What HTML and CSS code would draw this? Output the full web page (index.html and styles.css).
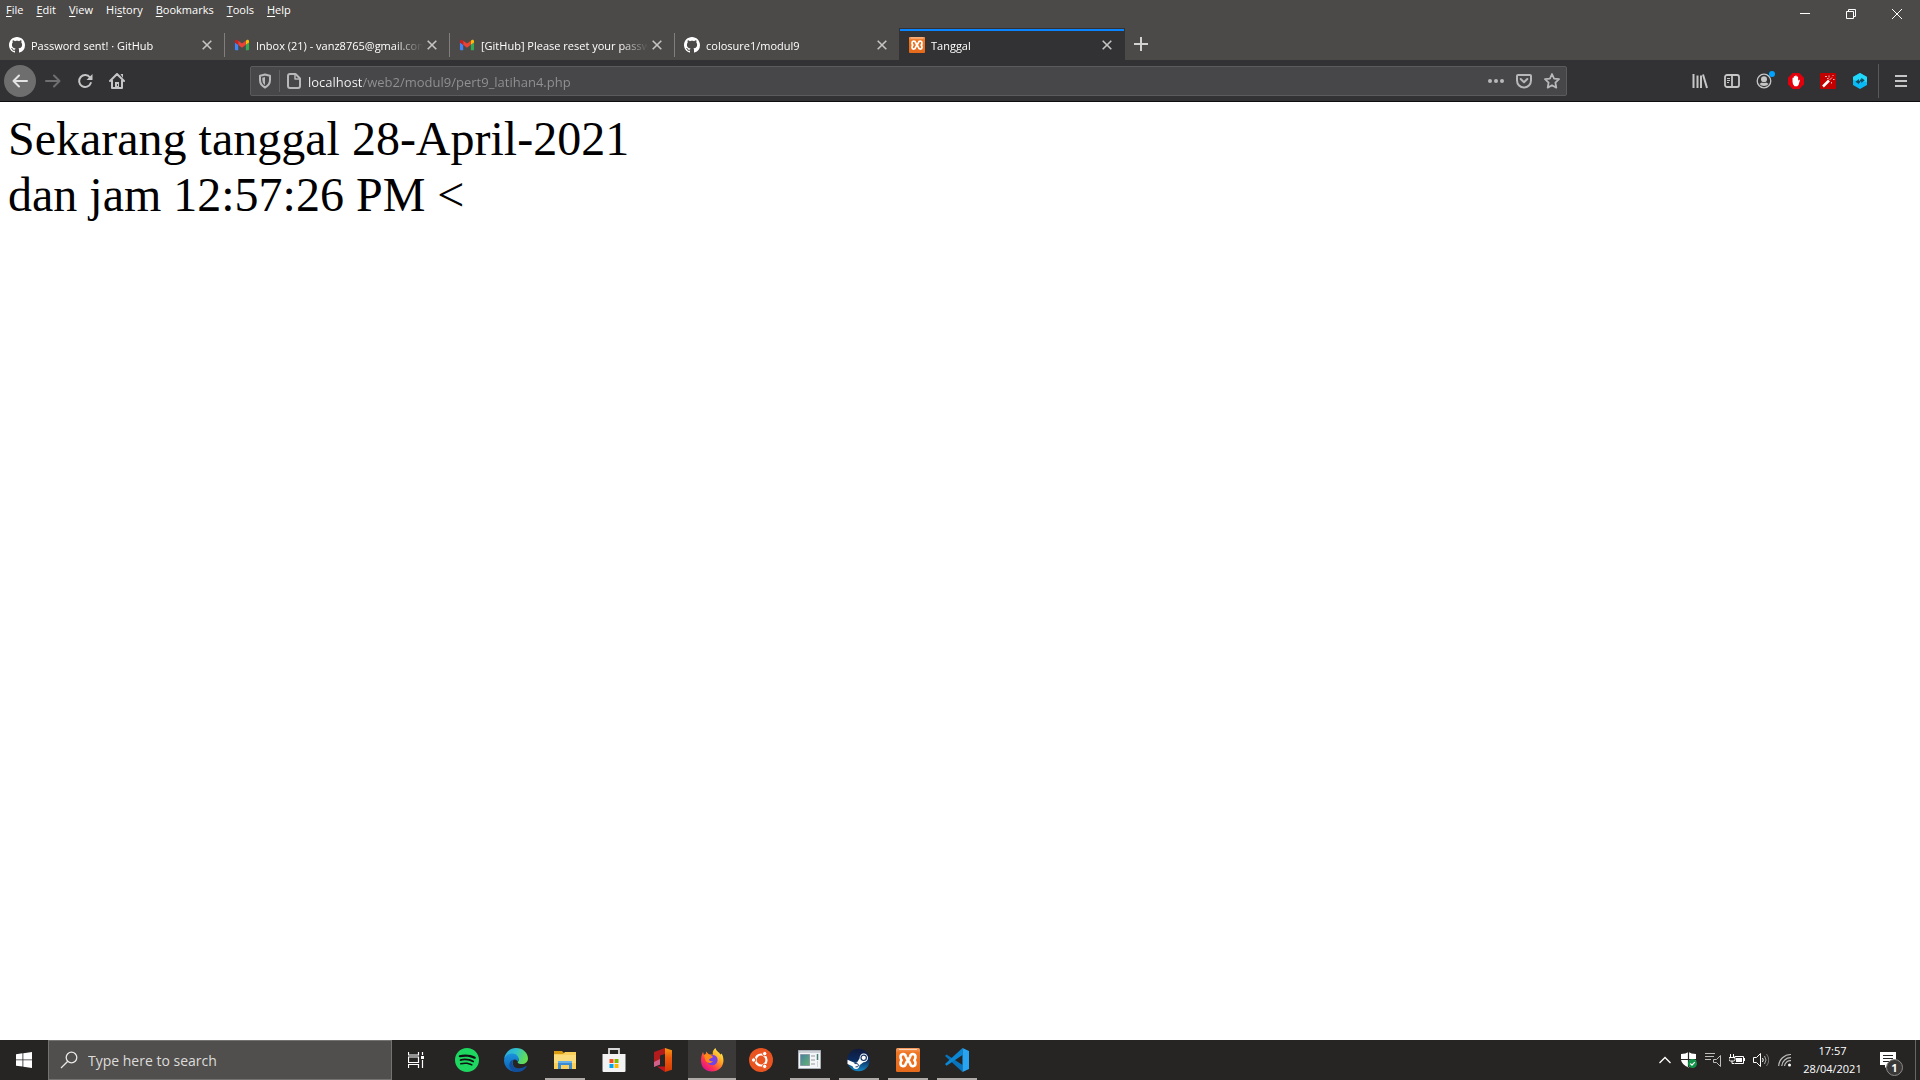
FILE: index.html
```html
<!DOCTYPE html>
<html lang="id">
<head>
<meta charset="utf-8">
<title>Tanggal</title>
<link rel="stylesheet" href="styles.css">
</head>
<body>
<svg class="defs" aria-hidden="true">
  <defs>
    <linearGradient id="xa" x1="0" y1="0" x2="0" y2="1"><stop offset="0" stop-color="#f7a064"/><stop offset=".2" stop-color="#ee7522"/><stop offset="1" stop-color="#e56a1b"/></linearGradient>
    <symbol id="github" viewBox="0 0 16 16"><path fill="#fff" d="M8 0C3.58 0 0 3.58 0 8c0 3.54 2.29 6.53 5.47 7.59.4.07.55-.17.55-.38 0-.19-.01-.82-.01-1.49-2.01.37-2.53-.49-2.69-.94-.09-.23-.48-.94-.82-1.13-.28-.15-.68-.52-.01-.53.63-.01 1.08.58 1.23.82.72 1.21 1.87.87 2.33.66.07-.52.28-.87.51-1.07-1.78-.2-3.64-.89-3.64-3.95 0-.87.31-1.59.82-2.15-.08-.2-.36-1.02.08-2.12 0 0 .67-.21 2.2.82.64-.18 1.32-.27 2-.27s1.36.09 2 .27c1.53-1.04 2.2-.82 2.2-.82.44 1.1.16 1.92.08 2.12.51.56.82 1.27.82 2.15 0 3.07-1.87 3.75-3.65 3.95.29.25.54.73.54 1.48 0 1.07-.01 1.93-.01 2.2 0 .21.15.46.55.38A8.01 8.01 0 0016 8c0-4.42-3.58-8-8-8z"/></symbol>
    <symbol id="gmail" viewBox="46 25 100 100"><path fill="#4285f4" d="M58 108h14V74L52 59v43c0 3.32 2.69 6 6 6"/><path fill="#34a853" d="M120 108h14c3.32 0 6-2.69 6-6V59l-20 15"/><path fill="#fbbc04" d="M120 48v26l20-15v-8c0-7.42-8.47-11.65-14.4-7.2"/><path fill="#ea4335" d="M72 74V48l24 18 24-18v26L96 92"/><path fill="#c5221f" d="M52 51v8l20 15V48l-5.6-4.2c-5.94-4.45-14.4-.22-14.4 7.2"/></symbol>
    <symbol id="xampp" viewBox="0 0 24 24"><rect width="24" height="24" rx="1.5" fill="url(#xa)"/><path d="M3 1.500h18" stroke="#fbd3b6"/><path fill="none" stroke="#fff" stroke-width="2.600" stroke-linejoin="round" d="M7 6Q9.500 6 9.800 8.500L11 10.800h2l1.200-2.300Q14.500 6 17 6q2.500.3 2.500 3 0 1.700-1.200 3.200 1.200 1.300 1.200 3 0 2.700-2.500 3-2.500 0-2.800-2.500L13 13.400h-2l-1.200 2.300Q9.500 18.200 7 18.200q-2.500-.3-2.500-3 0-1.700 1.200-3Q4.500 10.700 4.500 9 4.500 6.300 7 6z"/></symbol>
    <symbol id="cross" viewBox="0 0 10 10"><path d="M.7.700l8.600 8.600M9.300.700L.7 9.300" stroke="#c4c4c3" stroke-width="1.600"/></symbol>
  </defs>
</svg>

<header class="browser">
  <div class="menu-row">
    <nav class="menu">
      <button><u>F</u>ile</button><button><u>E</u>dit</button><button><u>V</u>iew</button><button>Hi<u>s</u>tory</button><button><u>B</u>ookmarks</button><button><u>T</u>ools</button><button><u>H</u>elp</button>
    </nav>
    <div class="window-controls">
      <button aria-label="Minimize"><svg width="10" height="10"><path d="M0 4.500h10" stroke="#fff"/></svg></button>
      <button aria-label="Restore"><svg width="10" height="10" fill="none" stroke="#fff"><path d="M.5 2.500h7v7h-7zM2.500 2.500v-2h7v7h-2"/></svg></button>
      <button aria-label="Close"><svg width="10" height="10"><path d="M0 0l10 10M10 0L0 10" stroke="#fff"/></svg></button>
    </div>
  </div>

  <div class="tabs">
    <div class="tab"><div class="tab-body"><svg class="fav"><use href="#github"/></svg><span class="tab-title">Password sent! · GitHub</span><button class="tab-close" aria-label="Close tab"><svg width="10" height="10"><use href="#cross"/></svg></button></div></div>
    <div class="tab"><div class="tab-body"><svg class="fav"><use href="#gmail"/></svg><span class="tab-title">Inbox (21) - vanz8765@gmail.com</span><button class="tab-close" aria-label="Close tab"><svg width="10" height="10"><use href="#cross"/></svg></button></div></div>
    <div class="tab"><div class="tab-body"><svg class="fav"><use href="#gmail"/></svg><span class="tab-title">[GitHub] Please reset your password</span><button class="tab-close" aria-label="Close tab"><svg width="10" height="10"><use href="#cross"/></svg></button></div></div>
    <div class="tab before-active"><div class="tab-body"><svg class="fav"><use href="#github"/></svg><span class="tab-title">colosure1/modul9</span><button class="tab-close" aria-label="Close tab"><svg width="10" height="10"><use href="#cross"/></svg></button></div></div>
    <div class="tab active"><div class="tab-body"><svg class="fav"><use href="#xampp"/></svg><span class="tab-title">Tanggal</span><button class="tab-close" aria-label="Close tab"><svg width="10" height="10"><use href="#cross"/></svg></button></div></div>
    <button class="new-tab" aria-label="New tab"><svg width="14" height="14"><path d="M7 0v14M0 7h14" stroke="#d2d2d1" stroke-width="2"/></svg></button>
  </div>

  <div class="toolbar">
    <div class="nav-buttons">
      <button class="back" aria-label="Back"><svg width="16" height="16" fill="none" stroke="#e4e4e4" stroke-width="2" stroke-linecap="round" stroke-linejoin="round"><path d="M15 8H1.500M7 2.500L1.500 8 7 13.500"/></svg></button>
      <button aria-label="Forward"><svg width="16" height="16" fill="none" stroke="#6f6f71" stroke-width="2" stroke-linecap="round" stroke-linejoin="round"><path d="M1 8h13.500M9 2.500L14.500 8 9 13.500"/></svg></button>
      <button aria-label="Reload"><svg width="16" height="16" fill="none" stroke="#c6c6c7" stroke-width="2" stroke-linecap="round"><path d="M13 4.500A6 6 0 1 0 13.800 10"/><path fill="#c6c6c7" stroke="none" d="M15.500 1v5.500q0 .5-.5.5H9.500z"/></svg></button>
      <button aria-label="Home"><svg width="16" height="16" fill="none" stroke="#c6c6c7" stroke-width="2" stroke-linecap="round" stroke-linejoin="round"><path d="M1 8l7-7 7 7M3 7.500V15h10V7.500"/><path stroke="none" fill="#c6c6c7" d="M6 9h4v6H6zM11.500 1H14v4z"/><path stroke="#323234" stroke-width="1" d="M8.500 11.500v1"/></svg></button>
    </div>
    <div class="address">
      <svg class="shield" width="16" height="16" fill="none" stroke="#b8b8ba" stroke-width="2" stroke-linejoin="round"><path d="M8 1.500Q5 2.500 3 2.700V7q0 5 5 7.500Q13 12 13 7V2.700Q11 2.500 8 1.500z"/><path fill="#b8b8ba" stroke="none" d="M8 4v8.300Q5.300 10.500 5.300 7V4.800z"/></svg>
      <span class="divider"></span>
      <svg class="doc" width="14" height="16" fill="none" stroke="#b8b8ba" stroke-width="2" stroke-linejoin="round"><path d="M3 1h5.500L13 5.500V13q0 2-2 2H3q-2 0-2-2V3q0-2 2-2z"/><path stroke-width="1.500" d="M8 1v5h5"/></svg>
      <input class="url" type="text" aria-label="Address" value="localhost/web2/modul9/pert9_latihan4.php">
      <button aria-label="Page actions"><svg width="16" height="16" fill="#b8b8ba"><circle cx="2" cy="8" r="2"/><circle cx="8" cy="8" r="2"/><circle cx="14" cy="8" r="2"/></svg></button>
      <button aria-label="Save to Pocket"><svg width="16" height="16" fill="none" stroke="#b8b8ba" stroke-width="2" stroke-linecap="round" stroke-linejoin="round"><path d="M2 2h12q1 0 1 1v4.500a7 7 0 0 1-14 0V3q0-1 1-1zM4.700 6L8 9.200 11.300 6"/></svg></button>
      <button aria-label="Bookmark"><svg width="16" height="16" fill="none" stroke="#b8b8ba" stroke-width="1.800" stroke-linejoin="round"><path d="M8 1l2.100 4.600 4.900.6-3.600 3.400.9 5L8 12.200l-4.300 2.400.9-5L1 6.200l4.900-.6z"/></svg></button>
    </div>
    <div class="extensions">
      <button aria-label="Library"><svg width="16" height="16" fill="none" stroke="#c6c6c7" stroke-width="2"><path d="M1.500 1v14M5.500 2.500V15M9 2.500V15M11 1.500L15 15"/></svg></button>
      <button aria-label="Sidebars"><svg width="16" height="16" fill="none" stroke="#c6c6c7" stroke-width="1.800"><rect x="1" y="2" width="14" height="12" rx="2"/><path d="M8 2v12"/><path stroke-width="1" d="M3 5.500h3M3 7.500h3M3 9.500h2"/></svg></button>
      <button class="account" aria-label="Account"><svg width="16" height="16" fill="#c6c6c7"><circle cx="8" cy="8" r="6.800" fill="none" stroke="#c6c6c7" stroke-width="1.300"/><circle cx="8" cy="6.300" r="3"/><path d="M3.500 11Q5 9.500 6 9.500q2 1 4 0 1 0 2.500 1.500Q11 13 8 13t-4.500-2z"/></svg><i class="dot"></i></button>
      <button aria-label="Ad blocker"><svg width="16" height="16"><path fill="#e2000d" d="M4.700 0h6.600L16 4.700v6.600L11.300 16H4.700L0 11.300V4.700z"/><path fill="#fff" d="M4.500 8.500V5q.7-.8 1.300 0V3.500q.7-.8 1.400 0v-.7q.8-.8 1.500 0v1q.8-.8 1.400 0V8l.8-1.200q.9-.3 1 .4L10.500 12l-1.300 1.200H6.500Q4.500 12 4.500 8.500z"/></svg></button>
      <button aria-label="Magic actions"><svg width="16" height="16"><rect width="16" height="16" rx="1" fill="#c20000"/><path stroke="#fff" stroke-width="2.500" d="M3 13.500l6-6"/><path stroke="#f4b5b5" d="M9.500 7L12 4.500M5 3.500h2M9 2.500v2M12.500 2.500h1M13 6.500h1.500M11.500 9v1.500M7 5.500h1.500"/></svg></button>
      <button aria-label="Sync extension"><svg width="16" height="16"><path fill="#08b9f5" d="M8 0l7 4v8l-7 4-7-4V4z"/><path fill="#20d9fa" d="M8 0l7 4v5L1 7V4z"/><path fill="#124a60" d="M3.500 8.700L7 6v1.700h1v2H7v1.500zM12.700 7.300L9.300 4.800v1.700H8v2h1.300v1.500z"/></svg></button>
      <button class="app-menu" aria-label="Menu"><svg width="12" height="12"><path d="M0 1h12M0 6h12M0 11h12" stroke="#c6c6c7" stroke-width="2"/></svg></button>
    </div>
  </div>
</header>

<main class="page">Sekarang tanggal 28-April-2021<br>dan jam 12:57:26 PM &lt;</main>

<footer class="taskbar">
  <button class="start" aria-label="Start"><svg width="16" height="16" fill="#fff"><path d="M0 2.200L6.500 1.300v6.200H0zM7.300 1.200L16 0v7.500H7.300zM0 8.300h6.500v6.300L0 13.700zM7.300 8.300H16V16l-8.700-1.200z"/></svg></button>
  <label class="search"><svg width="18" height="18" fill="none" stroke="#e8e8e8" stroke-width="1.300"><circle cx="11.500" cy="6.500" r="5.300"/><path d="M7.800 10.300L1 17"/></svg><input type="text" placeholder="Type here to search" aria-label="Search"></label>
  <button class="task-view" aria-label="Task View"><svg width="16" height="16" fill="none" stroke="#fff"><path stroke-width="1.200" d="M.5 0v3h10V0M.5 16v-3.500h10V16M.5 5h10v5.500H.5zM14.500 0v3M14.500 8v8"/><path fill="#fff" stroke="none" d="M13 4h3v3h-3z"/></svg></button>
  <div class="apps">
    <button aria-label="Spotify"><svg viewBox="0 0 24 24"><circle cx="12" cy="12" r="11" fill="#111"/><path fill="#1ed760" d="M12 0C5.400 0 0 5.400 0 12s5.400 12 12 12 12-5.400 12-12S18.660 0 12 0zm5.521 17.340c-.24.359-.66.480-1.021.24-2.820-1.740-6.360-2.101-10.561-1.141-.418.122-.779-.179-.899-.539-.12-.421.180-.780.540-.9 4.560-1.021 8.520-.6 11.640 1.320.420.180.479.659.301 1.020zm1.440-3.300c-.301.420-.841.600-1.262.300-3.239-1.980-8.159-2.580-11.939-1.380-.479.120-1.020-.120-1.140-.600-.120-.480.120-1.021.600-1.141C9.600 9.900 15 10.561 18.720 12.840c.361.181.540.780.241 1.200zm.120-3.360C15.240 8.400 8.820 8.160 5.160 9.301c-.600.179-1.200-.181-1.380-.721-.180-.601.180-1.200.720-1.381 4.260-1.260 11.280-1.020 15.721 1.621.539.300.719 1.020.419 1.560-.299.421-1.020.599-1.559.300z"/></svg></button>
    <button aria-label="Edge"><svg viewBox="0 0 24 24"><defs><linearGradient id="e1" x1="0" y1="0" x2="1" y2=".3"><stop offset="0" stop-color="#2aa5dc"/><stop offset=".5" stop-color="#2fc1cf"/><stop offset="1" stop-color="#62dd54"/></linearGradient><linearGradient id="e2" x1="0" y1="0" x2="0" y2="1"><stop offset="0" stop-color="#1a93dd"/><stop offset="1" stop-color="#0c5cb4"/></linearGradient></defs><path fill="url(#e1)" d="M.2 10.500C1 4.500 6 0 12 0c7 0 12 5 12 10.500 0 3.500-2.800 5.500-6 5.500-3 0-4.500-1-4.300-1.700.3-.7 1-1.300 1-2.500 0-2-2.200-4-5.200-4-5 0-8.300 2.200-9.300 2.700z"/><path fill="url(#e2)" d="M0 12C.5 8 4.500 5.500 8.500 5.500c4 0 6.200 3 6.200 6 0 1.300-1 2.300-1 2.300S12 10.500 9.500 12c-2 2-.5 8.500 5 11.500C6 25.500 0 19 0 12z"/><path fill="#114f9d" d="M9.300 11.500C7 15 9 19 12.500 20c4 1 7.500-.5 9.500-2 .5-.2.900.2.600.700C20.500 22 17 24 13 24c-6 0-8.500-5-7.500-8.500.5-2 2-3.500 3.800-4z"/></svg></button>
    <button class="open" aria-label="File Explorer"><svg viewBox="0 0 24 24"><path fill="#d99b12" d="M1 3h8l2 2v3H1z"/><path fill="#f9cf5b" d="M1 6h9l2-2h11v17H1z"/><path fill="#fbdc7d" d="M1 7h22v8H1z"/><path fill="#3c8bd0" d="M5 13h14v8h-3v-4H8v4H5z"/><path fill="#65b1e8" d="M5 13h14v2H5z"/></svg></button>
    <button aria-label="Microsoft Store"><svg viewBox="0 0 24 24"><path fill="none" stroke="#d9d9d9" stroke-width="1.800" d="M7 7V1h10v6"/><path fill="#f3f3f3" d="M.5 6h23v17q0 1-1 1h-21q-1 0-1-1z"/><path fill="#f25022" d="M7.500 11h4v4h-4z"/><path fill="#7fba00" d="M12.500 11h4v4h-4z"/><path fill="#00a4ef" d="M7.500 16h4v4h-4z"/><path fill="#ffb900" d="M12.500 16h4v4h-4z"/></svg></button>
    <button aria-label="Office"><svg viewBox="0 0 24 24"><defs><linearGradient id="of" x1="0" y1="0" x2="0" y2="1"><stop offset="0" stop-color="#f39a12"/><stop offset=".4" stop-color="#ef5a0c"/><stop offset="1" stop-color="#d13a04"/></linearGradient></defs><path fill="#b21c1c" d="M3 4l11-4v6L9 7.500v9L3 18z"/><path fill="#d0618a" d="M3 14l6-3v5.500L3 19z"/><path fill="#c41320" d="M6 18.500h8V24z"/><path fill="url(#of)" d="M14 0l7 2.200v19.600L14 24z"/></svg></button>
    <button class="current" aria-label="Firefox"><svg viewBox="0 0 24 24"><defs><linearGradient id="ff" x1=".9" y1=".1" x2=".2" y2=".9"><stop offset="0" stop-color="#fff44f"/><stop offset=".4" stop-color="#ff9a1f"/><stop offset=".75" stop-color="#ff3750"/><stop offset="1" stop-color="#e31587"/></linearGradient></defs><path fill="url(#ff)" d="M3 4l1 3 2-1.500V3.500l3 3h4C12 4 13.500 1.500 15.500 0c.5 3 3.500 4 5 6.500C22 6 21.500 5 21.500 5 24.500 11 24 16 20.500 20c-5 5-13 4.500-17 0C-.5 15 1 8 3 4z"/><circle cx="12.300" cy="12" r="5.300" fill="#7542e5"/><path fill="#ff8b16" d="M4 7c4-2 8 0 9 2-1 1.500-3 1-4 2.500 0 1.500 2 2 4 1.500-2 3-6 2.500-7.500-.5z"/><path fill="#ffc02c" d="M14 2c4 3 7 7 4 13 3-8-4-8-4-13z"/></svg></button>
    <button aria-label="Ubuntu"><svg viewBox="0 0 24 24"><circle cx="12" cy="12" r="12" fill="#e95420"/><circle cx="12" cy="12" r="5.500" fill="none" stroke="#fff" stroke-width="2.200"/><g fill="#fff" stroke="#e95420"><circle cx="4.600" cy="12" r="2.200"/><circle cx="15.700" cy="5.600" r="2.200"/><circle cx="15.700" cy="18.400" r="2.200"/></g></svg></button>
    <button class="open" aria-label="Application"><svg viewBox="0 0 24 24"><defs><linearGradient id="ap" x1="0" y1="0" x2="1" y2="1"><stop offset="0" stop-color="#477fa5"/><stop offset="1" stop-color="#62b46b"/></linearGradient></defs><path fill="#f4f5f6" stroke="#a9b0b7" d="M.5 2.500h22v18H.5z"/><path fill="#cbd1d6" d="M1 3h21v2H1z"/><path fill="url(#ap)" stroke="#8999a5" d="M2.500 6.500h9v11h-9z"/><path stroke="#c4c8cb" stroke-width="2" d="M13 8h4M13 12h4M13 16h4"/><path stroke="#457f70" stroke-width="1.500" d="M19.500 6v6"/><path stroke="#cfd3d6" d="M19.500 13v6"/></svg></button>
    <button class="open" aria-label="Steam"><svg viewBox="0 0 24 24"><defs><linearGradient id="st" x1="0" y1="0" x2="0" y2="1"><stop offset="0" stop-color="#101a3b"/><stop offset=".5" stop-color="#0b2a5d"/><stop offset="1" stop-color="#1387c4"/></linearGradient></defs><circle cx="11.500" cy="12" r="11.200" fill="url(#st)"/><path fill="#fff" d="M.5 11.700l7.500 3.200 2-.5 2.500-4c0-3 1.700-5 4.200-5 2.500 0 4.300 2 4.300 4.500s-2 4.300-4.500 4.300l-4 3c0 2.300-1.500 3.700-3.500 3.700-1.800 0-3-1.100-3.500-2.700l-5-2.200z"/><circle cx="16.700" cy="9.800" r="2.700" fill="#fff" stroke="#173864" stroke-width="1.200"/><path fill="none" stroke="#173864" d="M7.500 15.500q4-.5 4 1.700t-3 1.700"/></svg></button>
    <button class="open" aria-label="XAMPP"><svg viewBox="0 0 24 24"><use href="#xampp"/></svg></button>
    <button class="open" aria-label="Visual Studio Code"><svg viewBox="0 0 24 24"><path fill="#0874bd" d="M1.500 6.500L0 8l17.500 16V17z"/><path fill="#0c87d4" d="M17.500 0v7L1.500 17.800 0 16z"/><path fill="#27a5f2" d="M17.500 0L24 3v18l-6.500 3z"/></svg></button>
  </div>

  <div class="tray">
    <button aria-label="Show hidden icons"><svg width="12" height="8" fill="none" stroke="#fff" stroke-width="1.300"><path d="M.5 7L6 1.500 11.500 7"/></svg></button>
    <button aria-label="Security"><svg width="16" height="16"><path fill="#fff" d="M7.500 0Q5 2 0 2v6q1 5 7.500 7.500Q14 13 15 8V2Q10 2 7.500 0z"/><path stroke="#262524" stroke-width="1.200" d="M7.500 0v15M0 7.500h15"/><circle cx="11.500" cy="11.500" r="4.500" fill="#119447"/><path fill="none" stroke="#fff" stroke-width="1.200" d="M9.300 11.500l1.700 1.700 2.800-3"/></svg></button>
    <button aria-label="Audio service"><svg width="16" height="16" fill="none" stroke="#bdbdbc"><path d="M0 1.500h10M0 4.500h9M0 7.500h6M8.500 7.500h3l4-4v11l-4-4h-3z"/></svg></button>
    <button aria-label="Battery"><svg width="16" height="12" fill="none" stroke="#fff"><path d="M5.500 2.500h9v7h-9M1.500 0v3M4.500 0v3M0 3.500h6v2q0 1.500-1.500 1.500h-3Q0 7 0 5.500zM3 7v2.500h2M15.500 4v3"/><path fill="#fff" stroke="none" d="M7 4h6v4H7z"/></svg></button>
    <button aria-label="Volume"><svg width="16" height="16" fill="none" stroke="#fff"><path d="M.5 5.500h3l4-4v13l-4-4h-3zM9.500 6q1.500 2 0 4"/><path stroke="#aaa" d="M11.500 4q3 4 0 8"/><path stroke="#777" d="M13.500 2q4.500 6 0 12"/></svg></button>
    <button aria-label="Network"><svg width="14" height="14" fill="none" stroke="#bdbdbc" stroke-width="1.200"><path d="M.7 13A12 12 0 0 1 13 1.500M3.700 13A9 9 0 0 1 13 4.700M6.500 13A6 6 0 0 1 13 7.700"/><circle cx="11.500" cy="12" r="1.500" fill="#fff" stroke="none"/></svg></button>
    <button class="clock"><time>17:57</time><time>28/04/2021</time></button>
    <button class="notice" aria-label="Notifications"><svg width="16" height="16"><path fill="#fff" d="M0 0h16v13h-8l-3 3v-3H0z"/><path stroke="#262524" d="M3 3.500h10M3 6.500h10M3 9.500h7"/></svg><b class="badge">1</b></button>
    <button class="desktop" aria-label="Show desktop"></button>
  </div>
</footer>
</body>
</html>
```

FILE: styles.css
```css
* { box-sizing: border-box; }

body {
  margin: 0;
  min-height: 100vh;
  display: flex;
  flex-direction: column;
  background: #fff;
  font-family: "Open Sans", "Noto Sans", sans-serif;
  font-size: 11px;
  color: #fff;
}

button {
  display: flex;
  align-items: center;
  justify-content: center;
  margin: 0;
  padding: 0;
  border: 0;
  background: none;
  color: inherit;
  font: inherit;
}

input {
  min-width: 0;
  border: 0;
  outline: 0;
  padding: 0;
  background: none;
  font: inherit;
}

svg { flex: none; }
.defs { position: absolute; width: 0; height: 0; }

/* Title bar */
.browser { background: #4c4a48; }
.menu-row { display: flex; justify-content: space-between; height: 28px; }
.menu { display: flex; height: 18px; padding-left: 6px; gap: 13px; }
.menu u { text-underline-offset: 2px; }
.window-controls { display: flex; }
.window-controls button { width: 46px; }

/* Tabs */
.tabs { display: flex; height: 32px; }
.tab { flex: 0 1 225px; min-width: 0; padding: 5px 0 3px; }
.tab-body {
  display: flex;
  align-items: center;
  height: 24px;
  padding: 0 12px 0 9px;
  border-right: 1px solid #807f7d;
}
.fav { width: 16px; height: 16px; }
.tab-title {
  flex: 1;
  margin: 0 4px 0 6px;
  overflow: hidden;
  white-space: nowrap;
  mask-image: linear-gradient(to left, transparent, #000 28px);
}
.before-active { border-right: 1px solid #323234; }
.before-active .tab-body { border-right: 0; }
.active { background: linear-gradient(#0a84ff, #0a84ff) 0 1px / 224px 2px no-repeat #323234; }
.active .tab-body { border-right-color: transparent; }
.new-tab { width: 32px; }

/* Navigation toolbar */
.toolbar {
  display: flex;
  align-items: center;
  height: 42px;
  background: #323234;
  border-bottom: 1px solid #0c0c0d;
}
.nav-buttons { display: flex; align-items: center; padding-left: 4px; width: 133px; }
.nav-buttons button { width: 32px; height: 32px; }
.nav-buttons .back { border-radius: 50%; background: #6e6e6f; margin-right: 1px; }
.address {
  flex: 1;
  display: flex;
  align-items: center;
  height: 30px;
  margin: 0 117px;
  padding-left: 6px;
  background: #474749;
  border: 1px solid #5b5b5d;
  border-radius: 2px;
}
.divider { width: 1px; height: 22px; margin: 0 7px 0 6px; background: #606062; }
.doc { margin-right: 7px; }
.url {
  flex: 1;
  height: 26px;
  padding-top: 2px;
  font-size: 13px;
  color: #929294;
  background: linear-gradient(to right, #f9f9fa 54px, #929294 54px);
  background-clip: text;
  -webkit-text-fill-color: transparent;
}
.address button { width: 28px; height: 28px; }
.extensions { display: flex; align-items: center; }
.extensions button { width: 32px; height: 34px; }
.account { position: relative; }
.dot { position: absolute; top: 7px; right: 5px; width: 6px; height: 6px; border-radius: 50%; background: #00a2ff; }
.extensions .app-menu { width: 42px; margin-left: 2px; padding-left: 2px; border-left: 1px solid #59595b; }

/* Page content */
.page {
  flex: 1;
  padding: 9px 8px;
  color: #000;
  font-family: "Liberation Serif", serif;
  font-size: 48px;
  line-height: 56px;
}

/* Taskbar */
.taskbar { display: flex; height: 40px; background: #262524; }
.start, .task-view { width: 48px; }
.search {
  display: flex;
  align-items: center;
  width: 344px;
  padding-left: 11px;
  gap: 10px;
  background: #514f4d;
  border: 1px solid #757371;
}
.search input { flex: 1; font-size: 14px; color: #fff; }
.search input::placeholder { color: #dddcdb; opacity: 1; }
.apps { display: flex; gap: 1px; margin-left: 3px; }
.apps button { width: 48px; padding: 0 4px; }
.apps svg { width: 24px; height: 24px; }
.open { background: linear-gradient(#aeaba8, #aeaba8) center bottom / 40px 2px no-repeat; }
.apps .current { background: linear-gradient(#aeaba8, #aeaba8) center bottom / 48px 2px no-repeat #3b3a39; }
.tray { display: flex; margin-left: auto; }
.tray button { width: 24px; }
.tray .clock { flex-direction: column; width: 71px; line-height: 18px; }
.tray .notice { position: relative; width: 40px; }
.badge {
  position: absolute;
  left: 18px;
  top: 19px;
  width: 17px;
  height: 17px;
  border: 1px solid #8d8c8b;
  border-radius: 50%;
  background: #3a3938;
  line-height: 15px;
  text-align: center;
}
.tray .desktop { width: 5px; margin-left: 7px; border-left: 1px solid #686766; }
```
